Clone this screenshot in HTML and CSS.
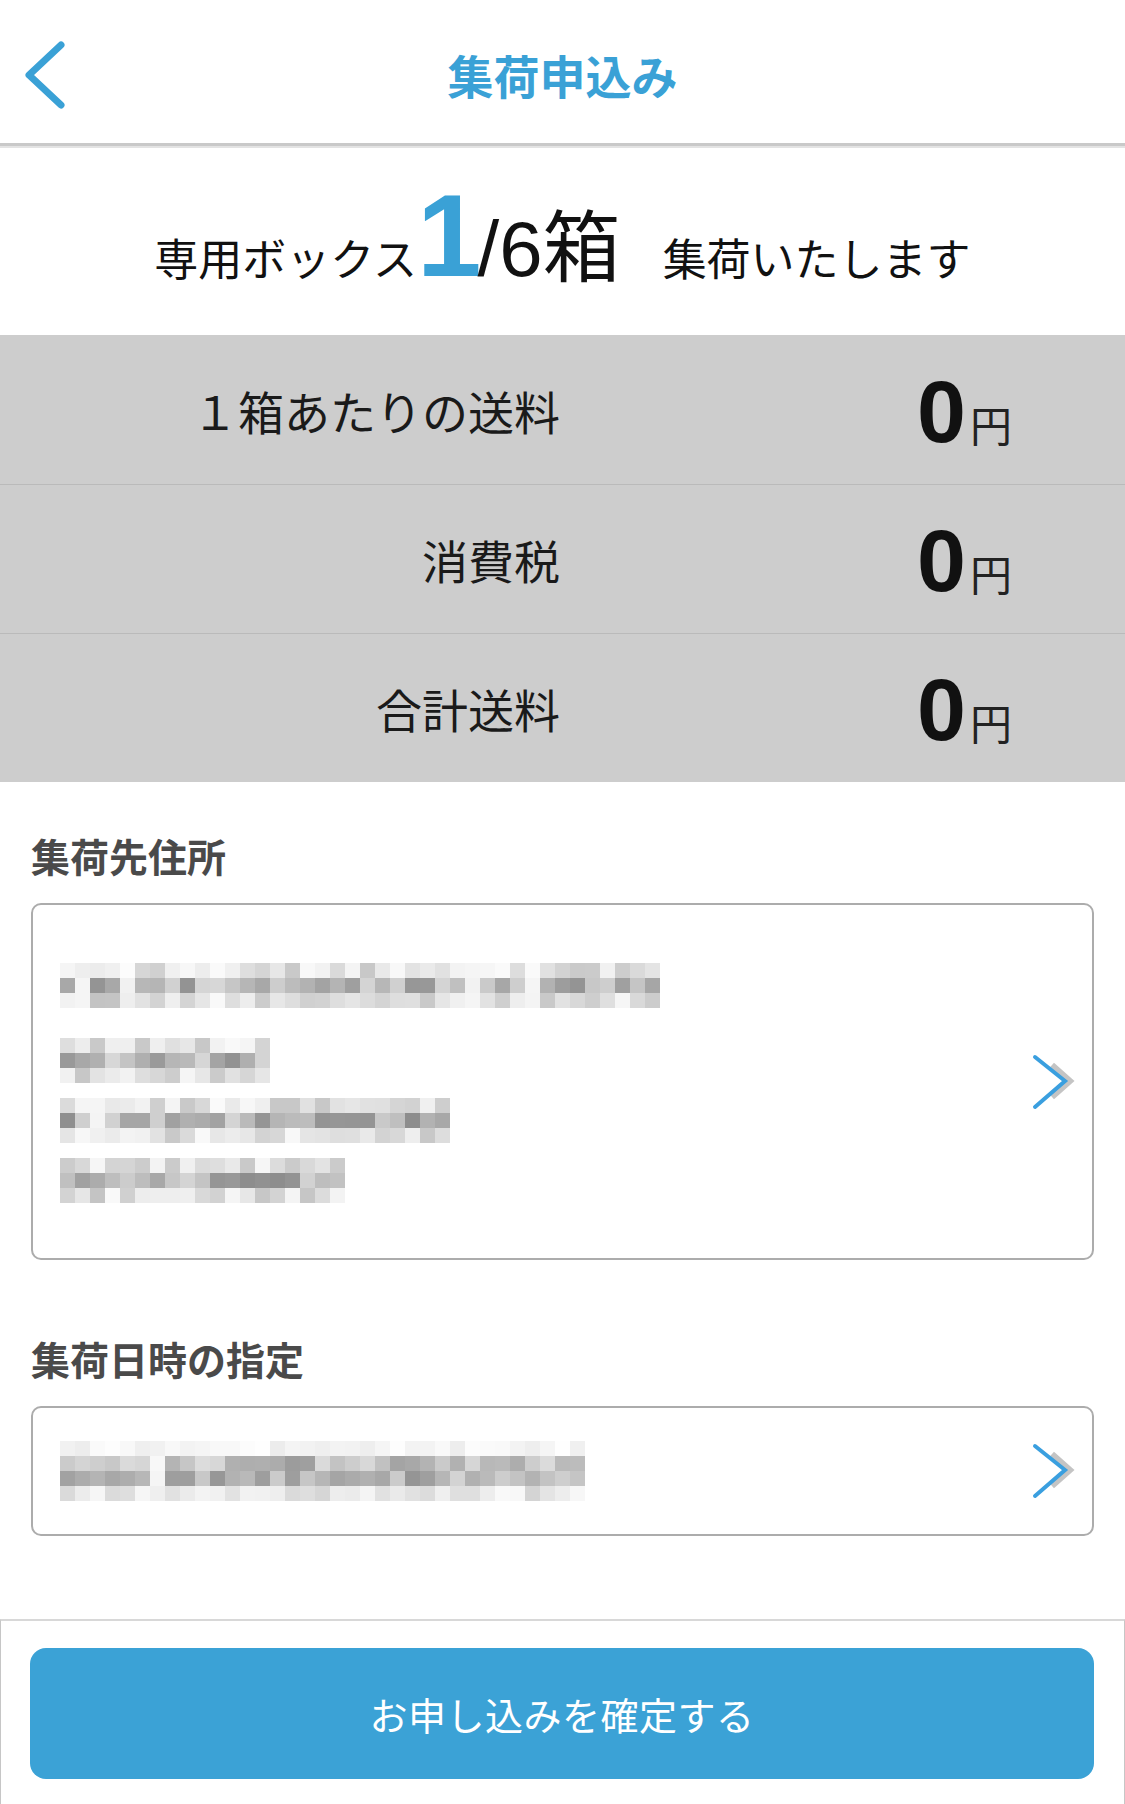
FILE: index.html
```html
<!DOCTYPE html>
<html lang="ja">
<head>
	<meta charset="utf-8" />
	<title>集荷申込み</title>
	<link rel="stylesheet" href="styles.css">
</head>
<body>
	<div class="topbar">
		<a class="back" href="#">
			<svg width="40" height="70" viewBox="0 0 40 70"><polyline points="36,5 4,35 36,65" fill="none" stroke="#3aa1d6" stroke-width="7" stroke-linecap="round" stroke-linejoin="round"/></svg>
		</a>
		<h1 class="title">集荷申込み</h1>
		<div></div>
	</div>

	<div class="summary">
		<span class="sum-text">専用ボックス</span><span class="sum-count">1</span><span class="sum-total">/6箱</span><span class="sum-text sum-tail">集荷いたします</span>
	</div>

	<div class="prices">
		<div class="price-row">
			<div class="price-label">１箱あたりの送料</div>
			<div class="price-value"><span class="num">0</span><span class="yen">円</span></div>
		</div>
		<div class="price-row">
			<div class="price-label">消費税</div>
			<div class="price-value"><span class="num">0</span><span class="yen">円</span></div>
		</div>
		<div class="price-row">
			<div class="price-label">合計送料</div>
			<div class="price-value"><span class="num">0</span><span class="yen">円</span></div>
		</div>
	</div>

	<div class="field field-address">
		<h2 class="field-label">集荷先住所</h2>
		<a class="field-box address-box" href="#">
			<div class="address-lines">
				<div class="mosaic first" data-cols="40" data-rows="3"></div>
				<div class="mosaic" data-cols="14" data-rows="3"></div>
				<div class="mosaic" data-cols="26" data-rows="3"></div>
				<div class="mosaic" data-cols="19" data-rows="3"></div>
			</div>
			<svg class="chevron" width="50" height="60" viewBox="0 0 50 60"><polyline points="24,13 42,29 24,45" fill="none" stroke="#c4c4c4" stroke-width="6"/><polyline points="7,5 37,29 7,55" fill="none" stroke="#3a9fdf" stroke-width="4" stroke-linecap="round"/></svg>
		</a>
	</div>

	<div class="field field-date">
		<h2 class="field-label">集荷日時の指定</h2>
		<a class="field-box date-box" href="#">
			<div class="mosaic" data-cols="35" data-rows="4"></div>
			<svg class="chevron" width="50" height="60" viewBox="0 0 50 60"><polyline points="24,13 42,29 24,45" fill="none" stroke="#c4c4c4" stroke-width="6"/><polyline points="7,5 37,29 7,55" fill="none" stroke="#3a9fdf" stroke-width="4" stroke-linecap="round"/></svg>
		</a>
	</div>

	<div class="footer">
		<button class="confirm" type="button">お申し込みを確定する</button>
	</div>

	<script src="script.js"></script>
</body>
</html>
```

FILE: styles.css
```css
body{
	margin: 0;
	background: #fff;
	font-family: "Noto Sans CJK JP", sans-serif;
	color: #1a1a1a;
}

a{
	color: inherit;
	text-decoration: none;
}

/* header */
.topbar{
	display: grid;
	grid-template-columns: 1fr auto 1fr;
	height: 143px;
	border-bottom: 3px solid #c9c9c9;
	box-shadow: 0 2px 0 #e3e3e3;
	margin-bottom: 2px;
}

.back{
	align-self: start;
	margin: 40px 0 0 25px;
	width: 40px;
	height: 70px;
}

.back svg{
	display: block;
}

.title{
	margin: 0;
	align-self: center;
	padding-top: 5px;
	font-size: 46px;
	line-height: 1;
	font-weight: 700;
	color: #3aa1d6;
}

/* box count */
.summary{
	display: flex;
	justify-content: center;
	align-items: baseline;
	height: 187px;
	box-sizing: border-box;
	padding-top: 30px;
	line-height: 1;
	color: #111;
}

.sum-text{
	font-size: 44px;
}

.sum-count{
	font-family: "Liberation Sans", sans-serif;
	font-weight: 700;
	font-size: 116px;
	color: #3aa1d6;
}

.sum-total{
	font-family: "Liberation Sans", "Noto Sans CJK JP", sans-serif;
	font-size: 78px;
	margin-left: -4px;
}

.sum-tail{
	margin-left: 42px;
}

/* prices */
.prices{
	background: #cdcdcd;
}

.price-row{
	display: grid;
	grid-template-columns: 560px 1fr;
	align-items: center;
	height: 149px;
	box-sizing: border-box;
}

.price-row + .price-row{
	border-top: 1px solid #bababa;
}

.price-label{
	text-align: right;
	font-size: 46px;
	line-height: 1;
	color: #1a1a1a;
}

.price-value{
	text-align: right;
	padding-right: 113px;
	padding-top: 4px;
	line-height: 1;
}

.num{
	font-family: "Liberation Sans", sans-serif;
	font-weight: 700;
	font-size: 88px;
	color: #111;
	margin-right: 4px;
}

.yen{
	font-size: 42px;
	color: #222;
}

/* address / date */
.field{
	padding: 0 31px;
}

.field-address{
	margin-top: 54px;
}

.field-date{
	margin-top: 79px;
}

.field-label{
	margin: 0 0 28px;
	font-size: 39px;
	line-height: 1;
	font-weight: 700;
	color: #4a4a4a;
}

.field-box{
	display: flex;
	align-items: center;
	border: 2px solid #acacac;
	border-radius: 10px;
	padding: 0 14px 0 27px;
	background: #fff;
}

.address-box{
	height: 357px;
	box-sizing: border-box;
}

.date-box{
	height: 130px;
	box-sizing: border-box;
}

.address-lines{
	display: flex;
	flex-direction: column;
	gap: 15px;
	padding-top: 3px;
}

.address-lines .first{
	margin-bottom: 15px;
}

.mosaic{
	display: flex;
	flex-direction: column;
}

.mosaic-row{
	display: flex;
}

.mosaic-cell{
	width: 15px;
	height: 15px;
}

.chevron{
	margin-left: auto;
	display: block;
}

/* footer */
.footer{
	margin-top: 83px;
	border-top: 2px solid #d8d8d8;
	border-left: 1px solid #c6c6c6;
	border-right: 1px solid #c6c6c6;
	padding: 27px 30px 25px 29px;
}

.confirm{
	display: block;
	width: 100%;
	height: 131px;
	border: none;
	border-radius: 16px;
	background: #3ba2d6;
	color: #fff;
	font-family: "Noto Sans CJK JP", sans-serif;
	font-size: 38px;
	letter-spacing: 0.5px;
	cursor: pointer;
}
```

FILE: script.js
```js
// fill the blurred (pixelated) address / date text blocks
var seed = 11;
function rand(){
	seed = (seed * 16807) % 2147483647;
	return (seed - 1) / 2147483646;
}

var profiles = {
	3: [[200, 250], [140, 215], [195, 250]],
	4: [[236, 255], [155, 222], [145, 215], [212, 250]]
};

function grey(v){
	v = Math.round(v);
	return "rgb(" + v + "," + v + "," + v + ")";
}

var blocks = document.querySelectorAll(".mosaic");
for (var b = 0; b < blocks.length; b++) {
	var el = blocks[b];
	var cols = parseInt(el.getAttribute("data-cols"), 10);
	var rows = parseInt(el.getAttribute("data-rows"), 10);
	var prof = profiles[rows];
	var gaps = [];
	for (var c = 0; c < cols; c++) {
		gaps.push(c > 0 && c < cols - 1 && rand() < 0.07);
	}
	for (var r = 0; r < rows; r++) {
		var row = document.createElement("div");
		row.className = "mosaic-row";
		for (var c = 0; c < cols; c++) {
			var cell = document.createElement("div");
			cell.className = "mosaic-cell";
			var lo = prof[r][0], hi = prof[r][1];
			var v = gaps[c] ? 238 + rand() * 15 : lo + rand() * (hi - lo);
			cell.style.background = grey(v);
			row.appendChild(cell);
		}
		el.appendChild(row);
	}
}
```
